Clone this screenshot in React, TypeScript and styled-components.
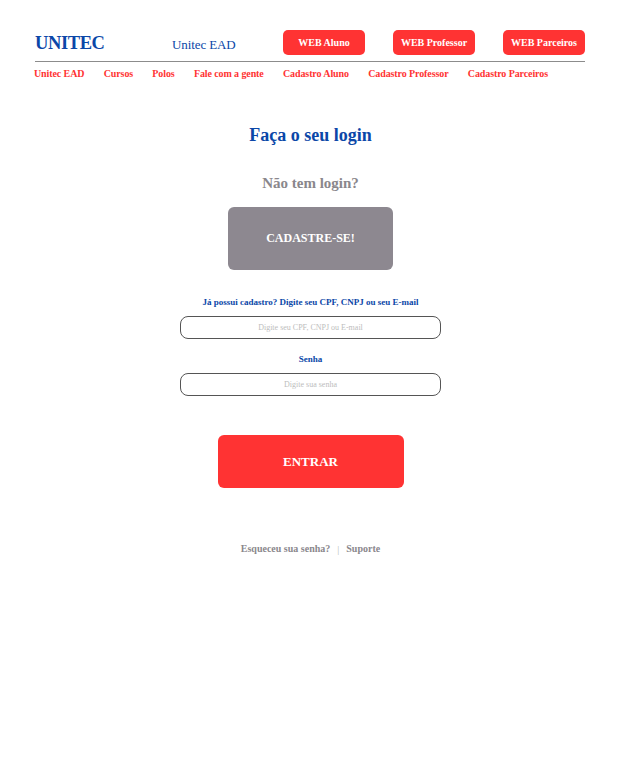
import styled, { createGlobalStyle } from 'styled-components';

const GlobalStyle = createGlobalStyle`
  html, body {
    margin: 0;
    padding: 0;
    background: #ffffff;
  }
  body {
    font-family: "Liberation Serif", "DejaVu Serif", serif;
  }
  * {
    box-sizing: border-box;
  }
`;

const BLUE = '#0b47a8';
const RED = '#ff3333';
const GRAY = '#8a878c';

const topButtons = ['WEB Aluno', 'WEB Professor', 'WEB Parceiros'];
const navLinks = [
  'Unitec EAD',
  'Cursos',
  'Polos',
  'Fale com a gente',
  'Cadastro Aluno',
  'Cadastro Professor',
  'Cadastro Parceiros',
];

export default function App() {
  return (
    <Page>
      <GlobalStyle />
      <Header>
        <TopRow>
          <Brand>
            <Logo>UNITEC</Logo>
          </Brand>
          <SubTitle>Unitec EAD</SubTitle>
          <TopButtons>
            {topButtons.map((b) => (
              <TopButton key={b}>{b}</TopButton>
            ))}
          </TopButtons>
        </TopRow>
        <Nav>
          {navLinks.map((n) => (
            <NavLink key={n} href="#">
              {n}
            </NavLink>
          ))}
        </Nav>
      </Header>

      <Main>
        <Title>Faça o seu login</Title>
        <Question>Não tem login?</Question>
        <SignupButton>CADASTRE-SE!</SignupButton>

        <Form>
          <Field>
            <Label>Já possui cadastro? Digite seu CPF, CNPJ ou seu E-mail</Label>
            <Input placeholder="Digite seu CPF, CNPJ ou E-mail" />
          </Field>
          <Field>
            <Label>Senha</Label>
            <Input type="password" placeholder="Digite sua senha" />
          </Field>
        </Form>

        <EnterButton>ENTRAR</EnterButton>

        <Footer>
          <FooterLink href="#">Esqueceu sua senha?</FooterLink>
          <Divider>|</Divider>
          <FooterLink href="#">Suporte</FooterLink>
        </Footer>
      </Main>
    </Page>
  );
}

const Page = styled.div`
  width: 621px;
  min-height: 768px;
  background: #fff;
`;

const Header = styled.header`
  width: 550px;
  margin-left: 35px;
  padding-top: 30px;
`;

const TopRow = styled.div`
  display: flex;
  align-items: flex-end;
  padding-bottom: 6px;
  border-bottom: 1px solid #8c8c8c;
`;

const Brand = styled.div`
  width: 137px;
`;

const Logo = styled.h1`
  margin: 0;
  font-size: 18.5px;
  line-height: 24px;
  font-weight: 700;
  color: ${BLUE};
  letter-spacing: -0.4px;
`;

const SubTitle = styled.span`
  font-size: 13px;
  line-height: 20px;
  color: ${BLUE};
  letter-spacing: -0.1px;
`;

const TopButtons = styled.div`
  display: flex;
  gap: 28px;
  margin-left: auto;
  align-self: flex-start;
`;

const TopButton = styled.button`
  width: 82px;
  height: 25px;
  border: none;
  border-radius: 5px;
  background: ${RED};
  color: #fff;
  font-family: inherit;
  font-size: 10px;
  font-weight: 700;
  padding: 0;
`;

const Nav = styled.nav`
  display: flex;
  justify-content: space-between;
  padding: 5px 37px 0 0;
  margin-left: -1px;
`;

const NavLink = styled.a`
  font-size: 10px;
  line-height: 14px;
  font-weight: 700;
  color: ${RED};
  text-decoration: none;
  letter-spacing: -0.1px;
`;

const Main = styled.main`
  display: flex;
  flex-direction: column;
  align-items: center;
  padding-top: 42px;
`;

const Title = styled.h2`
  margin: 0;
  font-size: 18px;
  line-height: 24px;
  font-weight: 700;
  color: ${BLUE};
`;

const Question = styled.p`
  margin: 26px 0 0;
  font-size: 15px;
  line-height: 20px;
  font-weight: 700;
  color: ${GRAY};
`;

const SignupButton = styled.button`
  margin-top: 14px;
  width: 165px;
  height: 63px;
  border: none;
  border-radius: 6px;
  background: #8d8890;
  color: #fff;
  font-family: inherit;
  font-size: 12px;
  font-weight: 700;
`;

const Form = styled.div`
  display: flex;
  flex-direction: column;
  align-items: center;
  gap: 14px;
  margin-top: 26px;
`;

const Field = styled.label`
  display: flex;
  flex-direction: column;
  align-items: center;
  gap: 7px;
`;

const Label = styled.span`
  font-size: 9px;
  line-height: 13px;
  font-weight: 700;
  color: ${BLUE};
`;

const Input = styled.input`
  width: 261px;
  height: 23px;
  border: 1px solid #555;
  border-radius: 8px;
  text-align: center;
  font-family: inherit;
  font-size: 8px;
  outline: none;
  &::placeholder {
    color: #bdbdbd;
  }
`;

const EnterButton = styled.button`
  margin-top: 39px;
  width: 186px;
  height: 53px;
  border: none;
  border-radius: 6px;
  background: ${RED};
  color: #fff;
  font-family: inherit;
  font-size: 13px;
  font-weight: 700;
`;

const Footer = styled.div`
  display: flex;
  align-items: center;
  gap: 7px;
  margin-top: 54px;
`;

const FooterLink = styled.a`
  font-size: 10px;
  line-height: 14px;
  font-weight: 700;
  color: ${GRAY};
  text-decoration: none;
`;

const Divider = styled.span`
  font-size: 10px;
  color: #b8b8b8;
`;
